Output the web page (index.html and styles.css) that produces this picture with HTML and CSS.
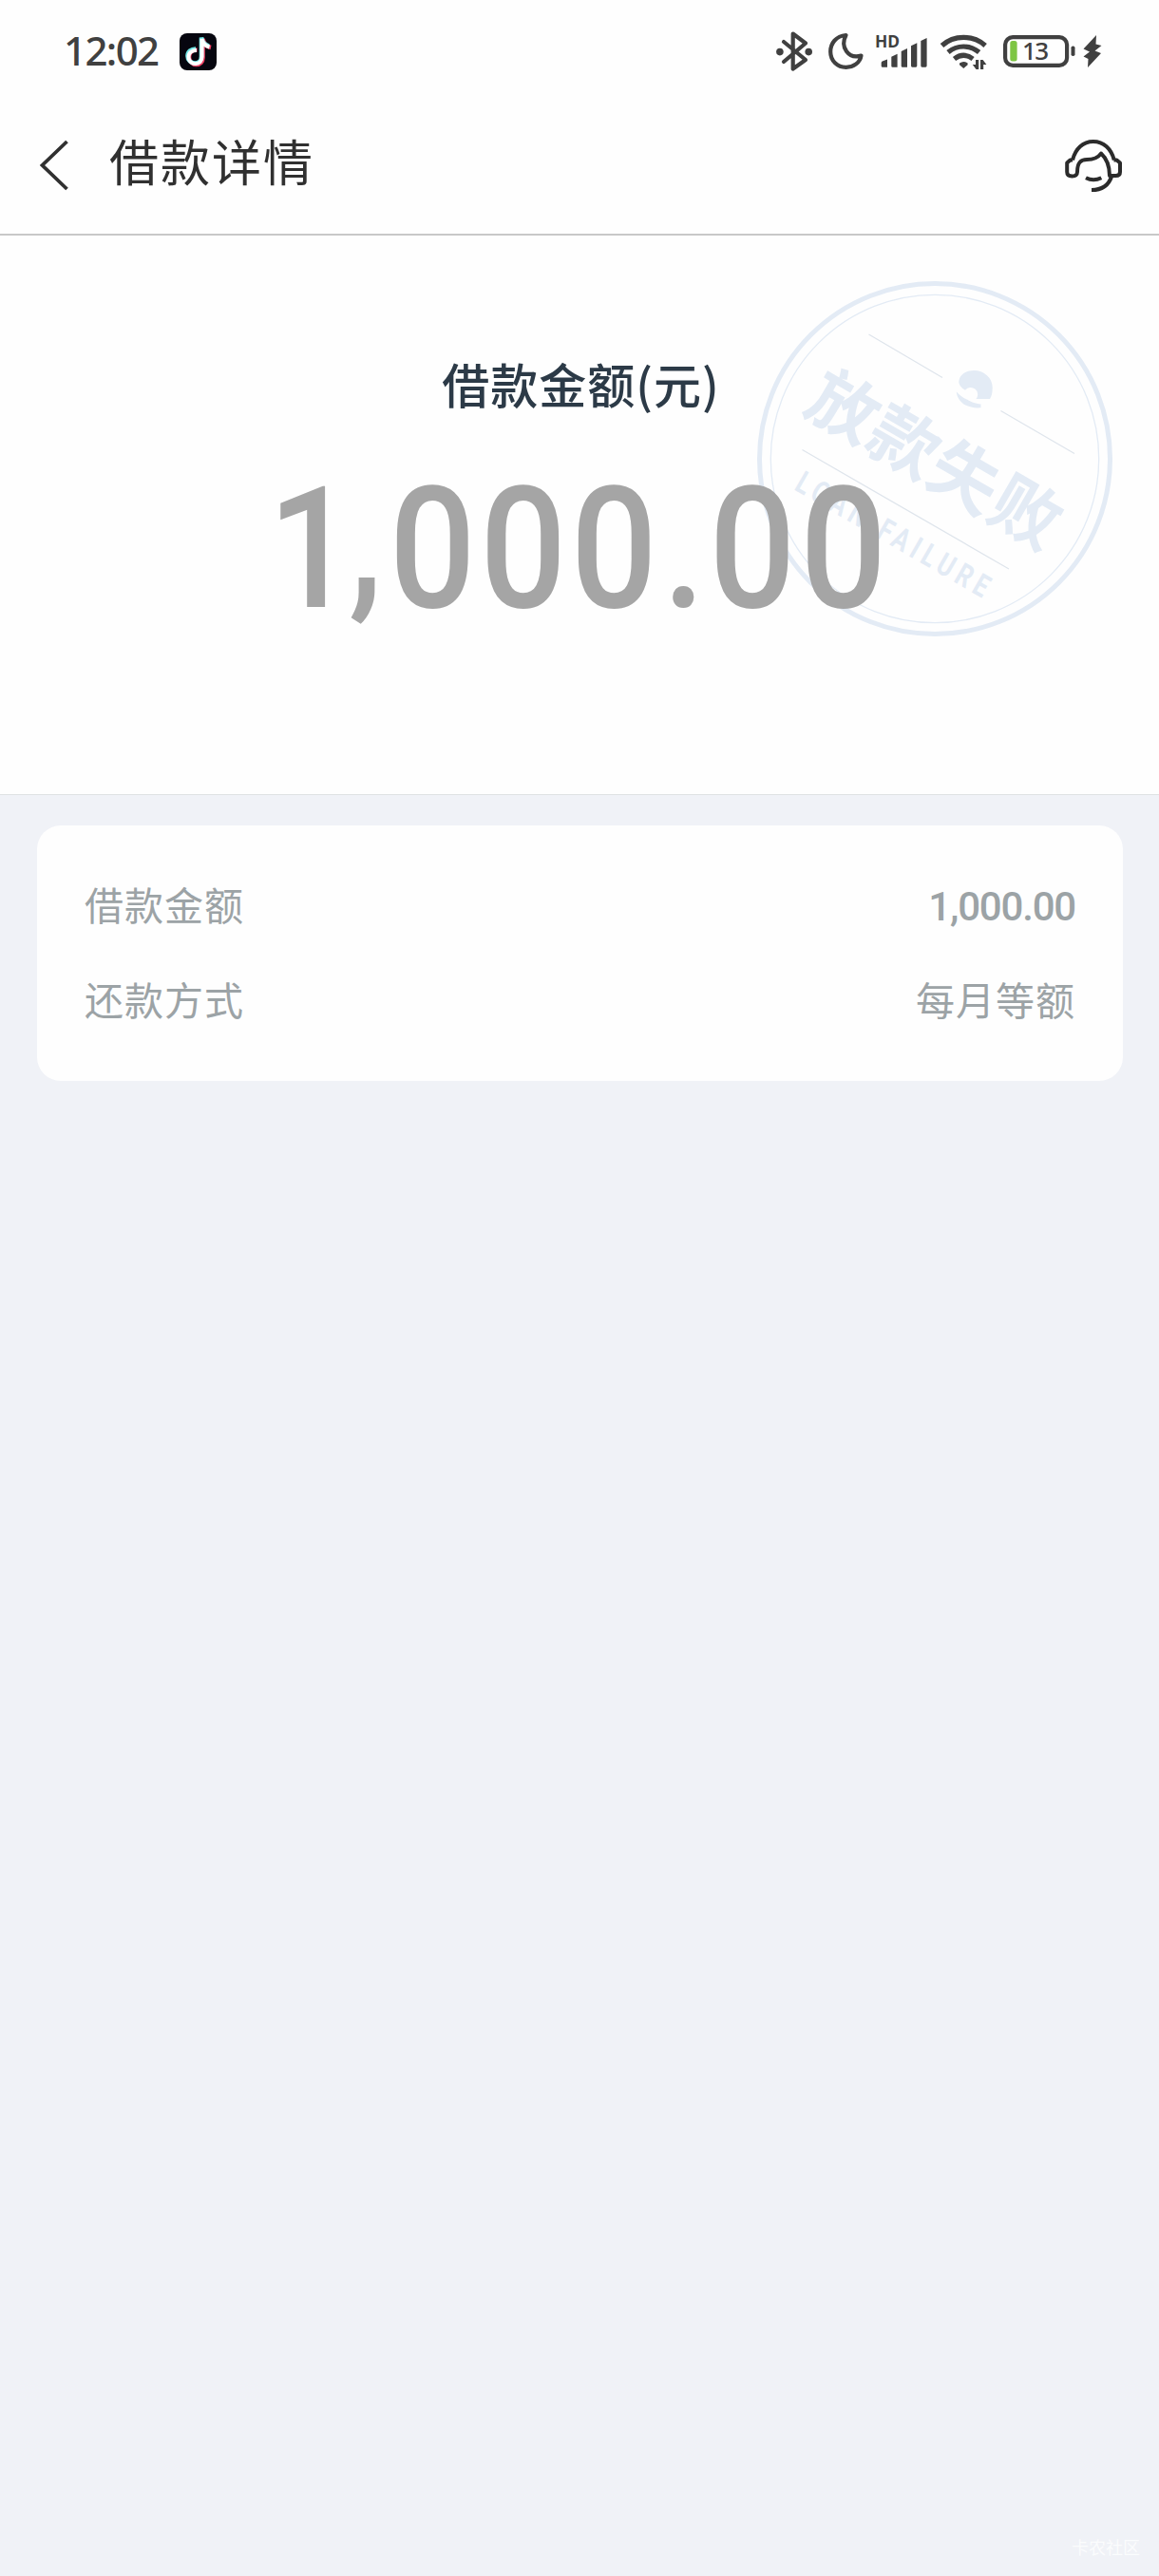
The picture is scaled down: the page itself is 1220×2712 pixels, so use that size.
FILE: index.html
```
<!DOCTYPE html>
<html lang="zh-CN">
<head>
    <meta charset="UTF-8">
    <meta name="viewport" content="width=device-width, initial-scale=1.0">
    <title>借款详情</title>
    <link rel="stylesheet" href="styles.css">
</head>
<body>

    <div class="status-bar">
        <span class="clock">12:02</span>
        <svg class="app-icon" width="39" height="39" viewBox="0 0 39 39">
            <rect width="39" height="39" rx="8" fill="#06060f"/>
            <g fill="none" stroke-width="4.6">
                <path stroke="#ee3f62" d="M18.5 17.5c-5 0-8.500 3-8.500 7.500s3.500 8 7.500 8 7-3 7-7V6c1 5 4 8 8.500 9"/>
                <path stroke="#6fe6e6" d="M17 16.500c-5 0-8.500 3-8.500 7.500s3.500 7.500 7.500 7.500 7-3 7-7V4.500c1 5 4 8 8 9"/>
                <path stroke="#fff" stroke-width="4" d="M18 18c-5 0-8.500 2.500-8.500 7s3.500 7 7.500 7 6.500-3 6.500-7V6c1 5 4 7.500 8 8.500"/>
            </g>
        </svg>
        <div class="status-icons">
            <svg class="bluetooth" width="38" height="42" viewBox="0 0 38 42">
                <path d="M8 11 31 30 17.700 39.500V2.500L31 12.500 8 32" fill="none" stroke="#404040" stroke-width="4.200" stroke-linecap="round" stroke-linejoin="round"/>
                <circle cx="3.900" cy="21.600" r="3.800"/>
                <circle cx="34.200" cy="21.600" r="3.800"/>
            </svg>
            <svg class="moon" width="37" height="38" viewBox="0 0 37 38">
                <path d="M18.500 2C8 3 2.200 10.500 2.200 19.500 2.200 29 9.500 35.800 18.500 35.800c8 0 15-5 16-12.300C21 27.500 12 14.500 18.500 2Z" fill="none" stroke="#404040" stroke-width="4.200" stroke-linejoin="round"/>
            </svg>
            <svg class="signal" width="54" height="35" viewBox="0 0 54 35">
                <text x="-1" y="13" textLength="26" lengthAdjust="spacingAndGlyphs">HD</text>
                <path d="M5.700 32.500v-3.500q0-1 1-1.500l5.300-2v8.300H7q-1.300 0-1.300-1.300ZM16.300 22.700l6.300-3v14h-5q-1.300 0-1.300-1.300ZM26.700 17l6.300-3v19.700h-5q-1.300 0-1.300-1.300ZM37 11.300l6.300-3v24q0 1.400-1.300 1.400h-3.700q-1.300 0-1.300-1.400ZM47.300 6l6.300-3v29.300q0 1.400-1.300 1.400h-3.700q-1.300 0-1.300-1.400Z"/>
            </svg>
            <svg class="wifi" width="50" height="38" viewBox="0 0 50 38">
                <g fill="none" stroke="#404040" stroke-width="5.200">
                    <path d="M1.500 13C14 1.500 34.600 1.500 47.100 13"/>
                    <path d="M8 20C17.500 12 31.100 12 40.600 20"/>
                    <path d="M14.500 27Q24.300 19.500 34.100 27"/>
                </g>
                <path d="M20 31.500q4.300-3 8.600 0v1.800L24.300 37 20 33.300Z"/>
                <path d="M37 28h3.200v10H37.500L33.800 33H37ZM42 38V28h2.600l3.800 5h-3.200v5Z"/>
            </svg>
            <svg class="battery" width="77" height="34" viewBox="0 0 77 34">
                <rect x="2.100" y="2.100" width="65" height="29.800" rx="8" fill="none" stroke="#404040" stroke-width="4.200"/>
                <rect x="7.300" y="6" width="7.300" height="21.500" rx="2.500" fill="#7ec544"/>
                <text x="20" y="26.300" textLength="28">13</text>
                <rect x="71.500" y="11.500" width="4" height="10.500" rx="1.800"/>
            </svg>
            <svg class="bolt" width="20" height="34" viewBox="0 0 20 34">
                <path d="M14 0 .5 14.500l6.500 3L.5 22.500l5 2.500L5 34l14-15-6.500-2.500L19.500 11l-6-1.500Z"/>
            </svg>
        </div>
    </div>

    <div class="nav-bar">
        <svg class="back" width="32" height="52" viewBox="0 0 32 52">
            <path d="M29.500 1 3.500 26l26 25" fill="none" stroke="#303030" stroke-width="3.800"/>
        </svg>
        <h1>借款详情</h1>
        <svg class="service" width="60" height="56" viewBox="0 0 60 56">
            <g fill="none" stroke="#2b2b2b" stroke-width="4" stroke-linejoin="round">
                <path d="M8 21.500C11 9.500 19 2 29.800 2s19 7.500 22 19.500"/>
                <path d="M8 21.500H5.500L2.200 24.500V34q0 4.500 5.300 4.500T13 34C13 25 16 21 23 21c8 0 12-2 15-6.500C44 20 47 27 47 38h6.500q4.500 0 4.500-4V24.500L54.500 21.500h-3"/>
                <path d="M49 39C46 48 39 53 28 53"/>
                <path d="M22 40.300q8 4 16.300 0"/>
            </g>
        </svg>
    </div>

    <div class="summary">
        <!-- loan failure stamp -->
        <svg class="stamp" width="374" height="374" viewBox="0 0 374 374">
            <circle cx="187" cy="187" r="184.500" fill="none" stroke="#e3ebf5" stroke-width="5"/>
            <circle cx="187" cy="187" r="172.700" fill="none" stroke="#e3ebf5" stroke-width="1.300"/>
            <path d="M117.500 56 195 101.500M256.500 136.500l77.500 45M47.500 177.500 265 303" stroke="#dfe5ec" stroke-width="1.300"/>
            <path d="M219 114.700C215 112.500 212.300 109 212.300 105.700 213 98 220 94 228 94c11 0 20 8 19.700 18.300 0 5-.7 8.700-2.700 11.700H230.500A6.800 6.800 0 1 0 219 114.700Z"/>
            <path d="M209.700 116.300C213 120 217 123.500 221 124.500c4 2.500 8 4.500 14.500 5v3.800C223 134.500 211 129 209.700 116.300Z"/>
            <text class="stamp-cn" transform="translate(187 187) rotate(30)" x="-147" y="27">放款失败</text>
            <text class="stamp-en" transform="translate(38 219) rotate(30) scale(.76 1)" x="0" y="0" textLength="302">LOAN FAILURE</text>
        </svg>
        <h2>借款金额(元)</h2>
        <svg class="amount" width="660" height="170" viewBox="0 0 660 170">
            <text transform="scale(.9 1)" x="-5.500 89 136.500 242.500 348.500 456.500 510.500 617" y="134 123 134 134 134 134 134 134">1,000.00</text>
        </svg>
    </div>

    <div class="card">
        <div class="row">
            <span>借款金额</span>
            <span class="number">1,000.00</span>
        </div>
        <div class="row">
            <span>还款方式</span>
            <span>每月等额</span>
        </div>
    </div>

    <div class="watermark">卡农社区</div>

</body>
</html>
```

FILE: styles.css
```
body {
    font-family: 'Roboto', 'Noto Sans CJK SC', sans-serif;
    background-color: #f0f2f7;
    margin: 0;
    min-height: 2712px;
    display: flex;
    flex-direction: column;
}

svg {
    display: block;
    overflow: visible;
    flex: none;
}

/* Status bar */
.status-bar {
    height: 108px;
    padding: 0 60px 0 67px;
    display: flex;
    align-items: center;
    background-color: #fefefe;
    color: #404040;
    box-sizing: border-box;
}

.clock {
    font-family: 'Noto Sans', sans-serif;
    font-size: 42px;
    font-weight: 500;
    letter-spacing: -1.6px;
    width: 122px;
    margin-bottom: 4px;
    white-space: nowrap;
}

.status-icons {
    margin-left: auto;
    display: flex;
    align-items: center;
    fill: #404040;
}

.moon { margin-left: 17px; }
.signal { margin-left: 13px; }
.wifi { margin-left: 14px; }
.battery { margin-left: 16px; }
.bolt { margin-left: 7px; }

.signal text {
    font-family: 'Noto Sans', sans-serif;
    font-size: 17px;
    font-weight: 700;
}

.battery text {
    font-family: 'Noto Sans', sans-serif;
    font-size: 26px;
    font-weight: 500;
}

/* Navigation */
.nav-bar {
    height: 140px;
    padding: 0 39px 8px 41px;
    display: flex;
    align-items: center;
    background-color: #fefefe;
    border-bottom: 2px solid #c8c8c8;
    box-sizing: border-box;
}

.nav-bar .back {
    margin-top: 2px;
}

.nav-bar h1 {
    margin: 1px 0 0 42px;
    font-size: 52px;
    font-weight: 400;
    letter-spacing: 2px;
    line-height: 60px;
    color: #303030;
}

.nav-bar .service {
    margin-left: auto;
    margin-top: 3px;
}

/* Amount */
.summary {
    position: relative;
    height: 589px;
    padding-top: 120px;
    background-color: #fefefe;
    border-bottom: 1px solid #dfe2e3;
    box-sizing: border-box;
}

.summary h2 {
    position: relative;
    margin: 0;
    padding-left: 3px;
    text-align: center;
    font-family: 'Noto Sans CJK SC', sans-serif;
    font-size: 50px;
    font-weight: 500;
    letter-spacing: 1px;
    line-height: 70px;
    color: #2c3a47;
}

.amount {
    position: relative;
    margin: 67px 0 0 287px;
}

.amount text {
    font-size: 178px;
    font-weight: 500;
    fill: #a5a5a5;
}

.stamp {
    position: absolute;
    top: 48px;
    right: 49px;
    fill: #e3ebf5;
}

.stamp-cn {
    font-family: 'Noto Sans CJK SC', sans-serif;
    font-size: 73px;
    font-weight: 700;
    letter-spacing: 1px;
}

.stamp-en {
    font-size: 33px;
    font-weight: 700;
}

/* Details */
.card {
    margin: 32px 38px 0 39px;
    height: 269px;
    padding: 32px 50px 0;
    border-radius: 25px;
    background-color: #fefefe;
    box-sizing: border-box;
}

.row {
    display: flex;
    justify-content: space-between;
    align-items: center;
    height: 100px;
    font-size: 41px;
    font-weight: 400;
    letter-spacing: 1px;
    color: #9ca3a6;
}

.row .number {
    margin-top: 6px;
    font-size: 42px;
    font-weight: 500;
    letter-spacing: -1.2px;
}

.watermark {
    margin: auto 20px 16px auto;
    font-size: 18px;
    line-height: 26px;
    color: #fbfcfd;
}
```
